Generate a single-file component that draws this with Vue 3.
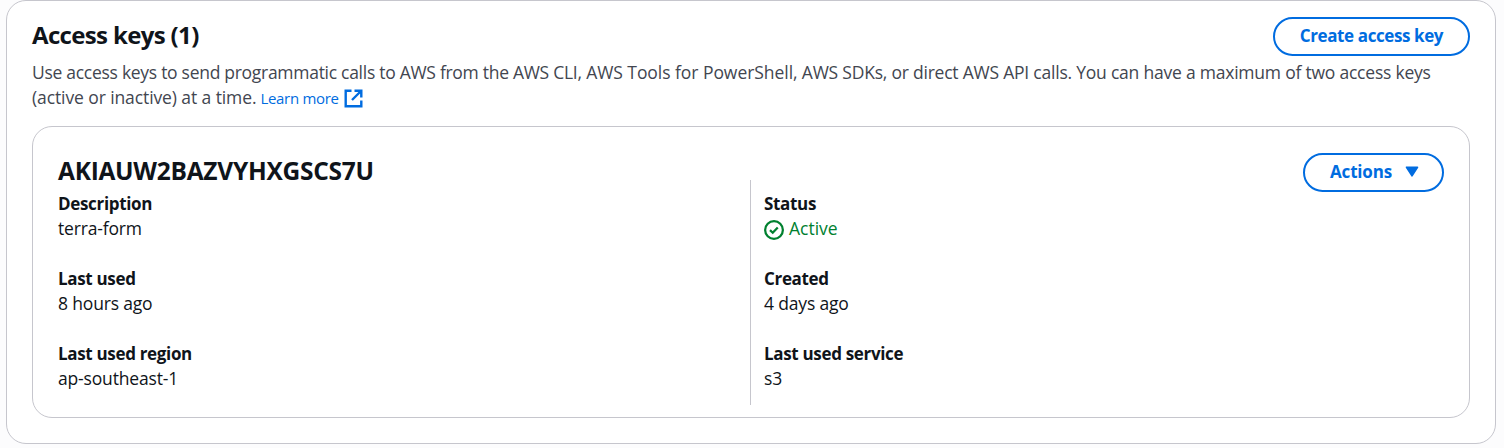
<script setup>
const columns = [
  [
    { label: 'Description', value: 'terra-form' },
    { label: 'Last used', value: '8 hours ago' },
    { label: 'Last used region', value: 'ap-southeast-1' },
  ],
  [
    { label: 'Status', value: 'Active', status: true },
    { label: 'Created', value: '4 days ago' },
    { label: 'Last used service', value: 's3' },
  ],
]
</script>

<template>
  <main class="page">
    <section class="container">
      <header class="head">
        <div class="title-row">
          <h2 class="title">Access keys (1)</h2>
          <button class="btn create">Create access key</button>
        </div>
        <p class="desc">
          <span class="line"><span class="tight">Use access keys to send programmatic calls to AWS from the AWS CLI,</span><span class="loose"> AWS Tools for PowerShell,</span> AWS SDKs, or direct AWS API calls. You can have a maximum of two access keys</span><br />
          <span class="line short">(active or inactive) at a time.</span>
          <a class="link">Learn more<svg class="ext" viewBox="0 0 19 19" fill="none" stroke="currentColor" stroke-width="2.4">
              <path d="M7.5 1.7H1.7v15.6h15.6V11.5" />
              <path d="M10.5 1.7h6.8v6.8M17 2 8 11" />
            </svg>
          </a>
        </p>
      </header>

      <article class="card">
        <div class="card-head">
          <h3 class="key">AKIAUW2BAZVYHXGSCS7U</h3>
          <button class="btn actions">
            <span>Actions</span>
            <svg class="caret" viewBox="0 0 14 11"><path d="M1.5 1.2h11L7 9.8z" fill="currentColor" stroke="currentColor" stroke-width="1.6" stroke-linejoin="round" /></svg>
          </button>
        </div>
        <div class="columns">
          <dl v-for="(col, i) in columns" :key="i" class="col">
            <div v-for="item in col" :key="item.label" class="pair">
              <dt>{{ item.label }}</dt>
              <dd :class="{ status: item.status }">
                <svg v-if="item.status" class="ok" viewBox="0 0 16 16" fill="none" stroke="currentColor" stroke-width="1.8">
                  <circle cx="8" cy="8" r="7.1" />
                  <path d="m4.8 8.1 2.2 2.1 4-4.2" />
                </svg>
                <span>{{ item.value }}</span>
              </dd>
            </div>
          </dl>
        </div>
      </article>
    </section>
  </main>
</template>

<style>
body {
  background: #fcfcfd;
}
</style>

<style scoped>
.page {
  box-sizing: border-box;
  height: 448px;
  padding: 0 8px 0 6px;
  overflow: hidden;
  color: #0f141a;
  font: 17.5px/25px "Open Sans", "Noto Sans", sans-serif;
  white-space: nowrap;
}
.container {
  box-sizing: border-box;
  height: 444px;
  padding: 16px 25px 0;
  background: #fff;
  border: 1px solid #c6c6cd;
  border-radius: 20px;
}
.title-row {
  display: flex;
  justify-content: space-between;
  align-items: flex-start;
  height: 43px;
}
.title,
.key {
  margin: 0;
  line-height: 30px;
  font-weight: 700;
}
.title {
  padding-top: 3px;
  font-size: 24px;
  letter-spacing: -0.65px;
}
.desc {
  margin: 0;
  height: 66px;
  color: #424650;
}
.line {
  letter-spacing: -0.22px;
}
.tight {
  letter-spacing: -0.285px;
}
.loose {
  letter-spacing: -0.05px;
}
.line.short {
  letter-spacing: -0.1px;
}
.link {
  margin-left: 4px;
  color: #006ce0;
  font-size: 15px;
  letter-spacing: -0.3px;
}
.ext {
  width: 19px;
  height: 19px;
  margin-left: 5px;
  vertical-align: -4px;
}
.btn {
  box-sizing: border-box;
  display: flex;
  align-items: center;
  justify-content: center;
  height: 39px;
  padding: 0 0 2px;
  color: #006ce0;
  background: #fff;
  border: 2px solid #006ce0;
  border-radius: 20px;
  font: inherit;
  font-size: 17px;
  font-weight: 700;
}
.create {
  width: 197px;
  letter-spacing: -0.4px;
}
.actions {
  width: 141px;
  padding-left: 2px;
  gap: 13px;
  letter-spacing: -0.2px;
}
.caret {
  width: 14px;
  height: 11px;
}
.card {
  box-sizing: border-box;
  height: 292px;
  padding: 26px 25px 0;
  border: 1px solid #c6c6cd;
  border-radius: 20px;
}
.card-head {
  display: flex;
  justify-content: space-between;
  height: 27px;
}
.key {
  padding-top: 3px;
  font-size: 24.5px;
  letter-spacing: -0.27px;
}
.columns {
  display: grid;
  grid-template-columns: 692px 1fr;
  height: 225px;
}
.col {
  display: flex;
  flex-direction: column;
  gap: 25px;
  margin: 0;
  padding-top: 11px;
}
.col + .col {
  padding-left: 13px;
  border-left: 1px solid #c6c6cd;
}
dt {
  font-size: 17px;
  font-weight: 700;
  letter-spacing: -0.33px;
}
dd {
  margin: 0;
  letter-spacing: -0.17px;
}
.status {
  display: flex;
  align-items: center;
  gap: 5px;
  color: #00802f;
  letter-spacing: 0;
}
.ok {
  width: 20px;
  height: 20px;
  margin-top: 2px;
}
</style>
